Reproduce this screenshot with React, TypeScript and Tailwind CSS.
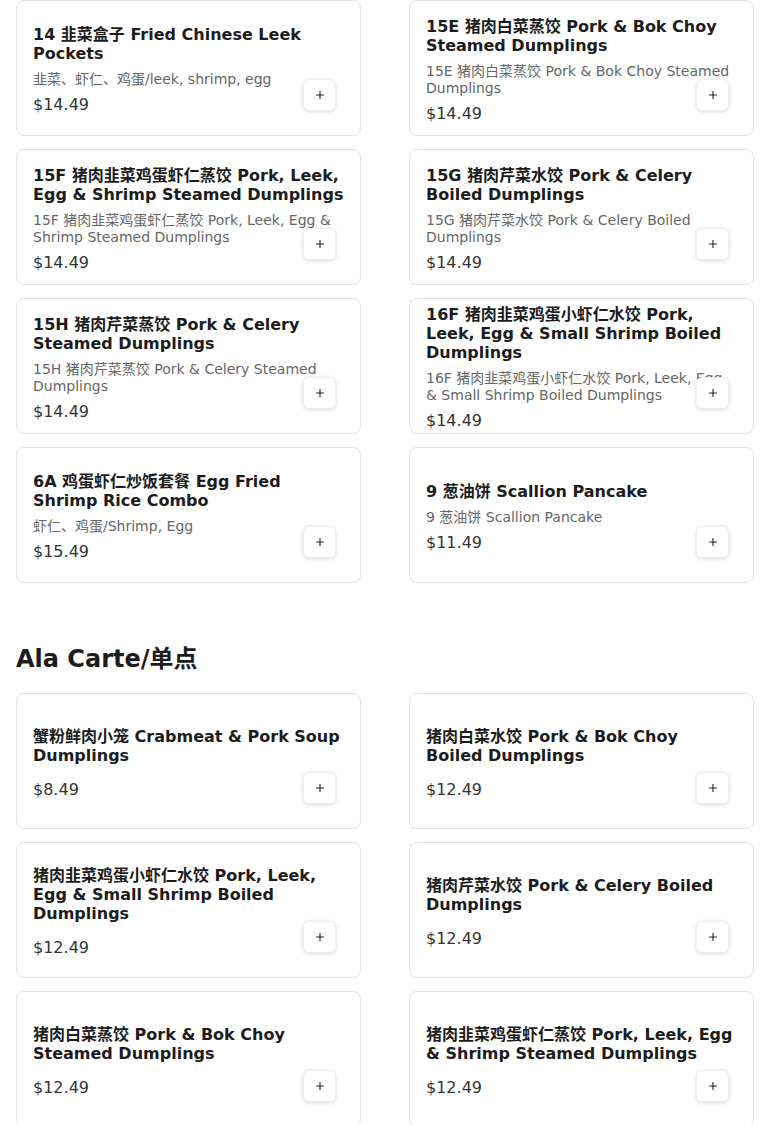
import { Plus } from "lucide-react";

type Item = {
  name: string;
  desc?: string;
  price: string;
};

const COMBOS: Item[] = [
  {
    name: "14 韭菜盒子 Fried Chinese Leek Pockets",
    desc: "韭菜、虾仁、鸡蛋/leek, shrimp, egg",
    price: "$14.49",
  },
  {
    name: "15E 猪肉白菜蒸饺 Pork & Bok Choy Steamed Dumplings",
    desc: "15E 猪肉白菜蒸饺 Pork & Bok Choy Steamed Dumplings",
    price: "$14.49",
  },
  {
    name: "15F 猪肉韭菜鸡蛋虾仁蒸饺 Pork, Leek, Egg & Shrimp Steamed Dumplings",
    desc: "15F 猪肉韭菜鸡蛋虾仁蒸饺 Pork, Leek, Egg & Shrimp Steamed Dumplings",
    price: "$14.49",
  },
  {
    name: "15G 猪肉芹菜水饺 Pork & Celery Boiled Dumplings",
    desc: "15G 猪肉芹菜水饺 Pork & Celery Boiled Dumplings",
    price: "$14.49",
  },
  {
    name: "15H 猪肉芹菜蒸饺 Pork & Celery Steamed Dumplings",
    desc: "15H 猪肉芹菜蒸饺 Pork & Celery Steamed Dumplings",
    price: "$14.49",
  },
  {
    name: "16F 猪肉韭菜鸡蛋小虾仁水饺 Pork, Leek, Egg & Small Shrimp Boiled Dumplings",
    desc: "16F 猪肉韭菜鸡蛋小虾仁水饺 Pork, Leek, Egg & Small Shrimp Boiled Dumplings",
    price: "$14.49",
  },
  {
    name: "6A 鸡蛋虾仁炒饭套餐 Egg Fried Shrimp Rice Combo",
    desc: "虾仁、鸡蛋/Shrimp, Egg",
    price: "$15.49",
  },
  {
    name: "9 葱油饼 Scallion Pancake",
    desc: "9 葱油饼 Scallion Pancake",
    price: "$11.49",
  },
];

const ALA_CARTE: Item[] = [
  { name: "蟹粉鲜肉小笼 Crabmeat & Pork Soup Dumplings", price: "$8.49" },
  { name: "猪肉白菜水饺 Pork & Bok Choy Boiled Dumplings", price: "$12.49" },
  {
    name: "猪肉韭菜鸡蛋小虾仁水饺 Pork, Leek, Egg & Small Shrimp Boiled Dumplings",
    price: "$12.49",
  },
  { name: "猪肉芹菜水饺 Pork & Celery Boiled Dumplings", price: "$12.49" },
  { name: "猪肉白菜蒸饺 Pork & Bok Choy Steamed Dumplings", price: "$12.49" },
  {
    name: "猪肉韭菜鸡蛋虾仁蒸饺 Pork, Leek, Egg & Shrimp Steamed Dumplings",
    price: "$12.49",
  },
];

function MenuCard({ item }: { item: Item }) {
  return (
    <div className="relative flex h-[136px] flex-col justify-center rounded-lg border border-[#e3e3e3] bg-white px-4 pt-[3px]">
      <h3 className="mb-2 text-base leading-[19px] font-bold text-[#1c1c1c]">
        {item.name}
      </h3>
      {item.desc && (
        <p className="text-sm leading-[17px] text-[#666666]">{item.desc}</p>
      )}
      <p className="mt-[7px] text-base leading-[19px] text-[#333333]">
        {item.price}
      </p>
      <button
        type="button"
        className="absolute right-6 bottom-6 flex h-8 w-[33px] items-center justify-center rounded-md border border-[#eeeeee] bg-white text-[#222222] shadow-[0_1px_4px_rgba(0,0,0,0.14)]"
      >
        <Plus size={12} strokeWidth={2.2} />
      </button>
    </div>
  );
}

export default function App() {
  return (
    <div
      className="min-h-screen bg-white px-4"
      style={{ fontFamily: '"DejaVu Sans", "Noto Sans CJK SC", sans-serif' }}
    >
      <div className="grid grid-cols-2 gap-x-12 gap-y-[13px]">
        {COMBOS.map((item) => (
          <MenuCard key={item.name} item={item} />
        ))}
      </div>

      <h2 className="mt-[60px] mb-[18px] text-2xl leading-8 font-bold text-[#1c1c1c]">
        Ala Carte/单点
      </h2>

      <div className="grid grid-cols-2 gap-x-12 gap-y-[13px] pb-6">
        {ALA_CARTE.map((item) => (
          <MenuCard key={item.name} item={item} />
        ))}
      </div>
    </div>
  );
}
